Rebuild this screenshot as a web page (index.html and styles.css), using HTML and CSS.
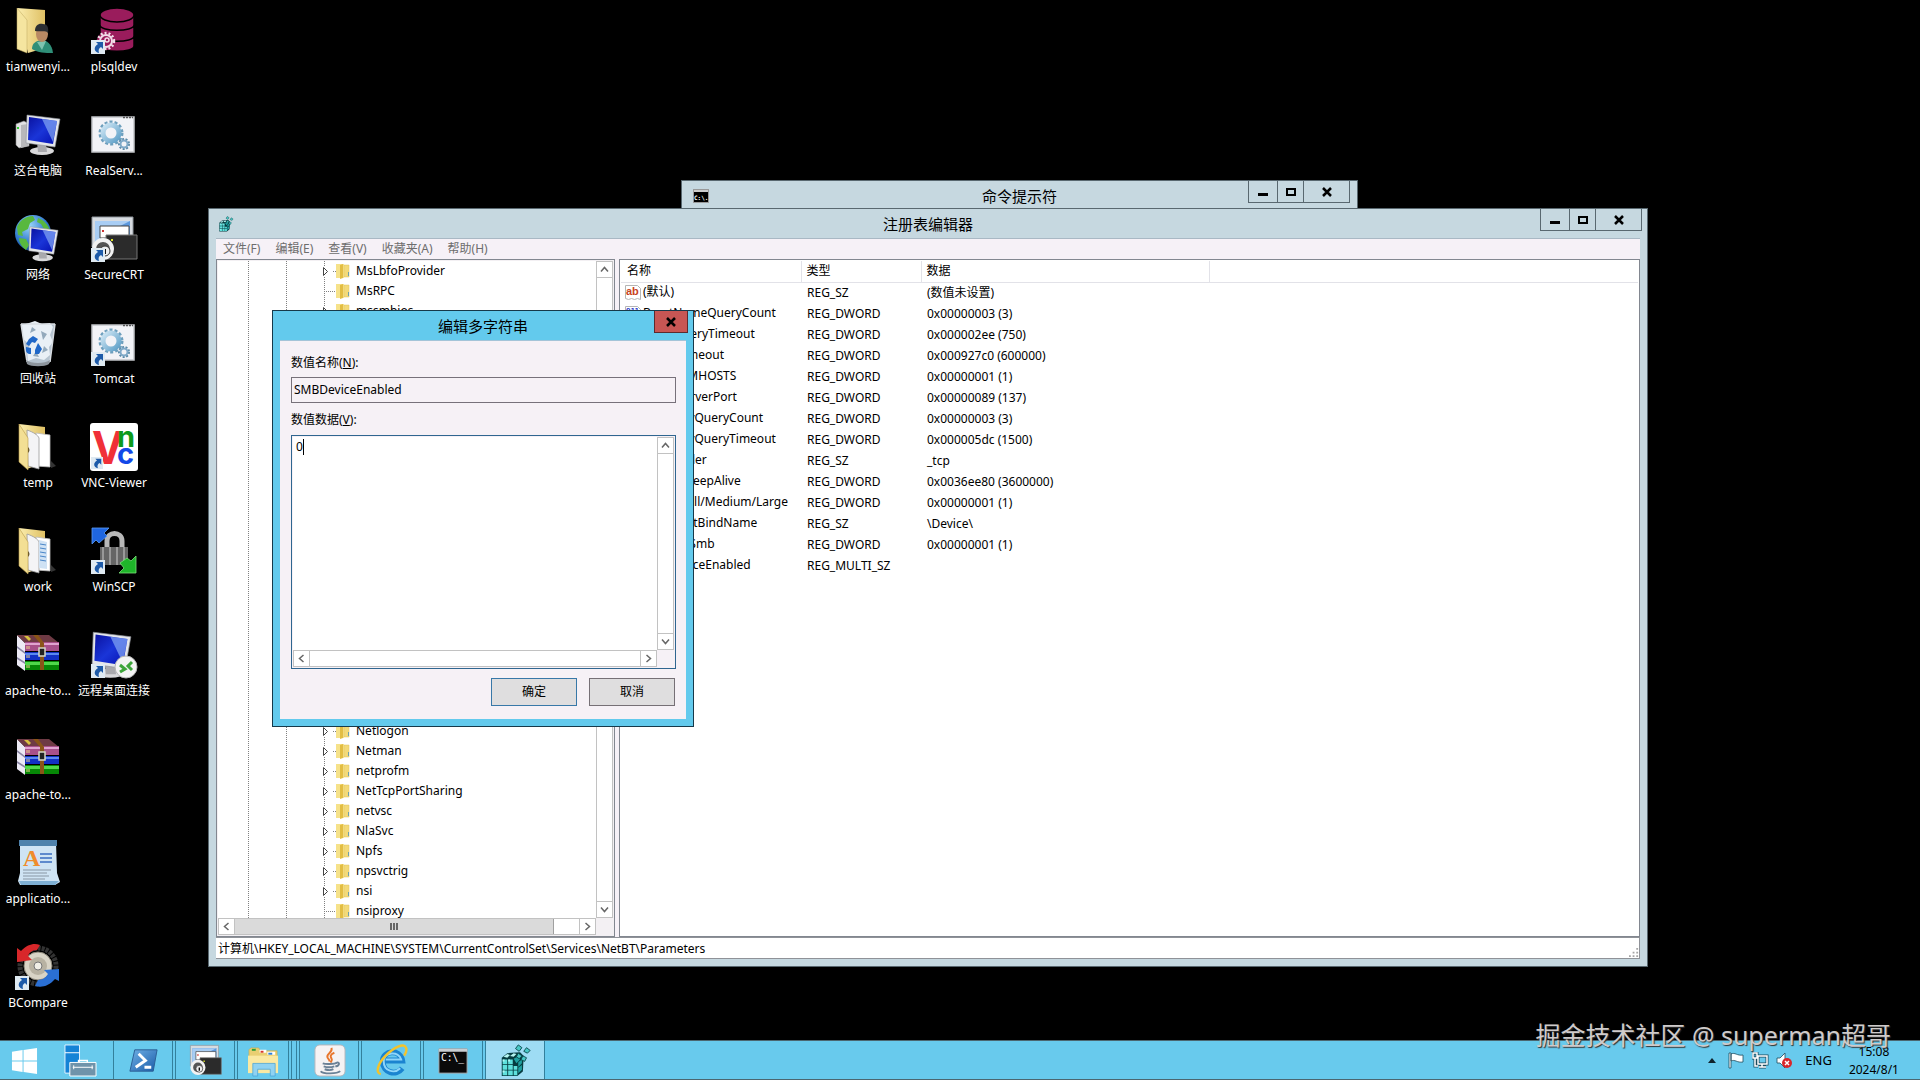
FILE: index.html
```html
<!DOCTYPE html>
<html lang="zh-CN">
<head>
    <meta charset="UTF-8">
    <meta name="viewport" content="width=device-width, initial-scale=1.0">
    <title>注册表编辑器</title>
    <link rel="stylesheet" href="styles.css">
</head>
<body>

<!-- Shared icons -->
<svg class="sprite" width="0" height="0" aria-hidden="true">
    <defs>
        <linearGradient id="screenBlue" x1="0" y1="0" x2="1" y2="1">
            <stop offset="0" stop-color="#0a12a0"/><stop offset=".5" stop-color="#1a35d8"/><stop offset="1" stop-color="#0510b0"/>
        </linearGradient>
        <linearGradient id="folderGold" x1="0" y1="0" x2="1" y2="0">
            <stop offset="0" stop-color="#fbeeb0"/><stop offset="1" stop-color="#dfc064"/>
        </linearGradient>
        <radialGradient id="globe" cx=".4" cy=".3" r=".8">
            <stop offset="0" stop-color="#9ad6fa"/><stop offset=".6" stop-color="#2f78cc"/><stop offset="1" stop-color="#0b3a86"/>
        </radialGradient>
        <linearGradient id="gearBlue" x1="0" y1="0" x2="1" y2="1">
            <stop offset="0" stop-color="#cfe6f4"/><stop offset="1" stop-color="#5fa0c8"/>
        </linearGradient>
        <linearGradient id="psBlue" x1="0" y1="0" x2="1" y2="1">
            <stop offset="0" stop-color="#6fb0e6"/><stop offset="1" stop-color="#1b5ca8"/>
        </linearGradient>
    </defs>
    <symbol id="shortcut" viewBox="0 0 14 14">
        <path fill="#dfeaf2" d="M0 0h14v14H0z"/>
        <path fill="#1d5aa8" d="M5 2h7v7l-2-2c-2 1-3 3-2 6C3 12 2 7 7 4z"/>
    </symbol>
    <symbol id="monitor" viewBox="0 0 36 42">
        <ellipse cx="17" cy="37" rx="12" ry="4" fill="#d9d9db"/>
        <path fill="#a9a9ad" d="M12 28l9 2 1 8h-9z"/>
        <path fill="#e4e6ea" stroke="#8d9098" stroke-width=".6" d="M2 1l33 4-5 28L1 29z"/>
        <path fill="url(#screenBlue)" d="M4 3l28 4-4 23L3 26z"/>
        <path fill="#7ea0f2" opacity=".75" d="M17 5l15 2-4 21z"/>
    </symbol>
    <symbol id="gears" viewBox="0 0 48 48">
        <path fill="#f2f3f7" stroke="#c4c6ca" stroke-width="1.500" d="M2 6h42v35H2z"/>
        <path stroke="#555" stroke-width="1.500" stroke-dasharray="2 1" d="M33 6.500h10"/>
        <circle cx="21" cy="22" r="11" fill="none" stroke="#6d9fbd" stroke-width="3" stroke-dasharray="3 2"/>
        <circle cx="21" cy="22" r="8" fill="none" stroke="url(#gearBlue)" stroke-width="5"/>
        <circle cx="34" cy="33" r="5" fill="none" stroke="#5b8aa8" stroke-width="2" stroke-dasharray="2 1.500"/>
        <circle cx="34" cy="33" r="3.500" fill="#f2f3f7" stroke="#7fa9c8" stroke-width="2"/>
    </symbol>
    <symbol id="rar" viewBox="0 2 48 48">
        <path fill="#eceaf4" d="M3 6l8 8v28l-8-6z"/>
        <path fill="#8a86a4" d="M3 17l8 6v2l-8-6zM3 28l8 5v2l-8-5z"/>
        <path fill="#6e3a44" d="M3 6h32l10 8H11z"/>
        <path fill="#d8c040" d="M10 7l5 5 2-2-3-3z"/>
        <path fill="#a8508a" d="M11 13h34v9H11z"/><path fill="#e0a4d0" d="M11 14h34v2H11z"/>
        <path fill="#1230c4" d="M11 23h34v8H11z"/><path fill="#5a88f0" d="M11 24h34v2H11z"/>
        <path fill="#068806" d="M11 32h34v9H11z"/><path fill="#4fd84a" d="M11 33h34v3H11z"/>
        <path fill="#8a5518" d="M19 6h5l6 8v27h-4V14z"/>
        <path fill="#222" stroke="#d6d6c6" stroke-width="1.500" d="M25 19h6v8h-6z"/>
        <path stroke="#efd68a" stroke-width="1" d="M13 17v3M15 17v3M13 26v3M15 26v3M13 36v3M15 36v3"/>
    </symbol>
    <symbol id="crt" viewBox="0 0 48 48">
        <path fill="#d7dbe0" stroke="#8f959b" d="M2 2h41v30H2z"/>
        <path fill="#5d98dd" d="M5 6h35v24H5z"/><path fill="#a8cdf4" d="M5 6h35L12 20v10H5z"/>
        <path fill="#fff" stroke="#444" d="M10 11h29v12H10z"/><path fill="#c33" d="M12 15h2v2h-2z"/>
        <path fill="#2b2b2b" stroke="#777" d="M16 20h31v24H16z"/>
        <path fill="#dce32a" d="M21 24h2v2h-2z"/>
        <circle cx="13" cy="34" r="9" fill="#555" stroke="#f2f2f2" stroke-width="4"/>
        <circle cx="15" cy="36" r="5" fill="#eee" stroke="#333"/><path stroke="#111" stroke-width="2" d="M15 34v5"/>
    </symbol>
    <symbol id="openfolder" viewBox="0 0 48 48">
        <path fill="url(#folderGold)" d="M5 1l26 3v35l-18 7z"/>
        <path fill="#fff" stroke="#bbb" stroke-width=".8" d="M22 10l14 2v32l-14-1z"/>
        <path fill="#f4f4f6" stroke="#999" stroke-width=".8" d="M13 7c6 2 11 5 12 8v31l-11-3z"/>
        <path fill="#f3df94" stroke="#b99b4a" stroke-width=".6" d="M5 1l9 14v32l-9-8z"/>
        <path fill="#6e5b2c" d="M14 24q3 3 0 6z"/>
        <path fill="#333" d="M37 38l5 5-5 2z"/>
    </symbol>
    <symbol id="treefolder" viewBox="0 0 14 16">
        <path fill="#f6e28a" d="M0 1h8v14H0z"/><path fill="#e2bd44" d="M4 2l3-1v14l-3 1z"/>
        <path fill="#f3da78" stroke="#dfc260" stroke-width=".5" d="M8 2h5v12H8z"/><path fill="#6fa0a8" d="M12 9h1v4h-1z"/>
    </symbol>
    <symbol id="expander" viewBox="0 0 7 11">
        <path fill="#fff" d="M0 0h7v11H0z"/><path fill="#fff" stroke="#444" d="M1.500 1.500v8l4-4z"/>
    </symbol>
    <symbol id="regcube" viewBox="0 0 34 36">
        <path fill="#063c40" d="M2 15l6-5 14-1 4 4-1 17-6 5H2z"/>
        <path fill="#5fe0dc" d="M3 17h5v5H3zM9 17h5v5H9zM3 23h5v5H3zM9 23h5v5H9zM3 29h5v5H3zM9 29h5v5H9zM15 29h4v5h-4zM15 24h4v4h-4z"/>
        <path fill="#b6f6f2" d="M4 14l4-3 3 1-3 3zM11 13l4-3 3 1-3 3zM3 17h2v2H3zM9 17h2v2H9zM3 29h2v2H3z"/>
        <path fill="#1fa0a0" d="M20 26l4-3v5l-4 4zM15 16l4-2 3 3-4 4zM20 20l4-3v4l-4 4z"/>
        <path fill="#48c8c6" stroke="#0a4a4e" d="M20 1l4 3-3 4-4-3zM29 4l4 3-3 3-4-2zM25 13l4 2-2 4-4-2zM20 10l4 3-3 3-3-2z"/>
    </symbol>
    <symbol id="up" viewBox="0 0 9 9"><path fill="none" stroke="#666" stroke-width="1.500" d="M1 6.500l3.500-4 3.500 4"/></symbol>
    <symbol id="down" viewBox="0 0 9 9"><path fill="none" stroke="#666" stroke-width="1.500" d="M1 2.500l3.500 4 3.500-4"/></symbol>
    <symbol id="left" viewBox="0 0 9 9"><path fill="none" stroke="#666" stroke-width="1.500" d="M6.500 1l-4 3.500 4 3.500"/></symbol>
    <symbol id="right" viewBox="0 0 9 9"><path fill="none" stroke="#666" stroke-width="1.500" d="M2.500 1l4 3.500-4 3.500"/></symbol>
    <symbol id="min" viewBox="0 0 10 10"><path d="M0 6h10v3H0z"/></symbol>
    <symbol id="max" viewBox="0 0 10 10"><path fill="none" stroke="#000" stroke-width="2" d="M1 2h8v6H1z"/></symbol>
    <symbol id="close" viewBox="0 0 10 10"><path fill="none" stroke="#000" stroke-width="2.500" d="M1 1l8 8M9 1l-8 8"/></symbol>
    <symbol id="strval" viewBox="0 0 16 16">
        <path fill="#fff" stroke="#b5b5b5" d="M.5 .5h12l3 3v11l-3-1-3 1-3-1-3 1-3-1z"/>
        <text x="1" y="10" class="val-str">ab</text>
    </symbol>
    <symbol id="binval" viewBox="0 0 16 16">
        <path fill="#fff" stroke="#b5b5b5" d="M.5 .5h12l3 3v11l-3-1-3 1-3-1-3 1-3-1z"/>
        <text x="1" y="7" class="val-bin">011</text><text x="1" y="13" class="val-bin">110</text>
    </symbol>
</svg>

<main class="desktop">
    <nav class="icons">
        <a href="#"><svg viewBox="0 0 48 48">
            <path fill="url(#folderGold)" d="M3 1l28 2v38l-17 5z"/>
            <path fill="#f5e5a0" stroke="#bda65c" stroke-width=".5" d="M3 1l10 12v33L3 42z"/>
            <path fill="#2f8f78" d="M18 42c0-6 4-8 9-9 6 0 11 4 12 13-8 0-15 0-21-4z"/>
            <path fill="#7fc4b0" d="M23 35l5 8 4-9z"/>
            <ellipse cx="28" cy="27" rx="6" ry="8" fill="#b98a64"/>
            <path fill="#2c2f33" d="M21 24c0-6 4-8 8-7 4 0 6 3 5 9-2-3-8-1-13-2z"/>
        </svg><span>tianwenyi...</span></a>
        <a href="#"><svg viewBox="0 0 48 48">
            <g fill="#9a1c5c" stroke="#000" stroke-width="1.500">
                <path d="M10 31v8c0 7 34 7 34 0v-8z"/><path d="M10 20v9c0 7 34 7 34 0v-9z"/><path d="M10 8v10c0 7 34 7 34 0V8z"/>
                <ellipse cx="27" cy="8" rx="17" ry="7"/>
            </g>
            <circle cx="16" cy="34" r="9" fill="#9a1c5c"/>
            <circle cx="16" cy="34" r="8" fill="none" stroke="#f2dce8" stroke-width="2.500" stroke-dasharray="2 2"/>
            <circle cx="16" cy="34" r="6" fill="none" stroke="#f2dce8" stroke-width="2"/>
            <circle cx="17" cy="33" r="2" fill="none" stroke="#f2dce8" stroke-width="1.500"/>
            <use href="#shortcut" x="1" y="33" width="14" height="14"/>
        </svg><span>plsqldev</span></a>
        <a href="#"><svg viewBox="0 0 48 48">
            <path fill="#e2e2e4" stroke="#8a8a8a" stroke-width=".6" d="M2 13l8-3 5 3v22L5 37l-3-3z"/><path fill="#b8b8bb" d="M7 14l7-1v22l-7 2z"/>
            <path fill="#3c3" d="M3 16h2v2H3z"/>
            <use href="#monitor" x="11" y="3" width="36" height="42"/>
        </svg><span>这台电脑</span></a>
        <a href="#"><svg viewBox="0 0 48 48"><use href="#gears"/></svg><span>RealServ...</span></a>
        <a href="#"><svg viewBox="0 0 48 48">
            <circle cx="19" cy="18" r="18" fill="url(#globe)"/>
            <path fill="#58b83e" d="M3 12C6 5 12 1 19 1l2 4-5 3-2 6-6 3 1 4-5-1zM24 3c6 2 10 7 12 12l-6-1-3-5-4-2zM5 23l7 1 3 6-3 5c-4-3-7-7-7-12z"/>
            <use href="#monitor" x="14" y="11" width="31" height="36"/>
        </svg><span>网络</span></a>
        <a href="#"><svg viewBox="0 0 48 48"><use href="#crt"/><use href="#shortcut" x="1" y="33" width="14" height="14"/></svg><span>SecureCRT</span></a>
        <a href="#"><svg viewBox="0 0 48 48">
            <path fill="#b6c4d0" d="M7 5h34l-5 38c-4 5-19 5-23 0z"/>
            <path fill="#e9f0f6" d="M8 6l7-2 6-2 7 3 8-1 3 4-3 8 3 7-4 5 1 8-6 5-8-2-8 3-1-10 3-6-7-6z"/>
            <path fill="#93a9bb" d="M27 12l6 3-4 6zM18 8l4 3-6 3zM30 27l4 4-6 3zM22 32l3 6-6-1z"/>
            <path fill="#2068c8" d="M15 20l4-3 5 3-3 4-3-1-3 4-3-2zM24 24l4 6-3 5h-4v-4zM12 28l5 1v6h-2c-3-1-4-4-3-7z"/>
            <path fill="none" stroke="#d8dde2" stroke-width="1.500" d="M7 5h34M7 5l6 38M41 5l-5 38"/>
            <path fill="#8d959d" d="M12 41c5 4 19 4 24 0l-1 4c-4 3-18 3-22 0z"/>
        </svg><span>回收站</span></a>
        <a href="#"><svg viewBox="0 0 48 48"><use href="#gears"/><use href="#shortcut" x="1" y="33" width="14" height="14"/></svg><span>Tomcat</span></a>
        <a href="#"><svg viewBox="0 0 48 48"><use href="#openfolder"/></svg><span>temp</span></a>
        <a href="#"><svg viewBox="0 0 48 48">
            <rect width="48" height="48" rx="3" fill="#fff"/>
            <text x="3" y="41" class="vnc-v">V</text><text x="27" y="24" class="vnc-n">n</text><text x="27" y="41" class="vnc-c">c</text>
            <use href="#shortcut" x="1" y="33" width="12" height="14"/>
        </svg><span>VNC-Viewer</span></a>
        <a href="#"><svg viewBox="0 0 48 48"><use href="#openfolder"/>
            <path fill="#cfe2f4" d="M25 13l8 2v27l-8-1z"/><path stroke="#4a86c8" d="M26 17l6 1M26 21l6 1M26 25l6 1M26 29l6 1M26 33l6 1"/>
        </svg><span>work</span></a>
        <a href="#"><svg viewBox="0 0 48 48">
            <path fill="none" stroke="#b8b8b8" stroke-width="5" d="M17 21v-7c0-10 15-10 15 0v7"/>
            <path fill="#666" d="M10 20h28v18H10z"/><path stroke="#999" stroke-width="2" d="M13 20v18M20 20v18M27 20v18M34 20v18"/>
            <path fill="#1f66e0" stroke="#5a9af4" stroke-width=".8" d="M2 1h17l-5 5 3 3-8 7-3-3-4 4z"/>
            <path fill="#1fb52a" stroke="#7be07a" stroke-width=".8" d="M46 46H29l5-5-4-5 7-5 4 3 5-5z"/>
            <use href="#shortcut" x="1" y="33" width="14" height="14"/>
        </svg><span>WinSCP</span></a>
        <a href="#"><svg viewBox="0 0 48 48"><use href="#rar"/></svg><span>apache-to...</span></a>
        <a href="#"><svg viewBox="0 0 48 48">
            <use href="#monitor" x="1" y="0" width="41" height="48"/>
            <circle cx="36" cy="36" r="11" fill="#f3f3f3" stroke="#b5b5b5"/>
            <path fill="none" stroke="#3da43a" stroke-width="3" d="M30 34l5 4-5 3M42 31l-4 4 4 4"/>
            <use href="#shortcut" x="1" y="33" width="14" height="14"/>
        </svg><span>远程桌面连接</span></a>
        <a href="#"><svg viewBox="0 0 48 48"><use href="#rar"/></svg><span>apache-to...</span></a>
        <i></i>
        <a href="#"><svg viewBox="0 0 48 48">
            <path fill="#cfe4f4" d="M6 3h36l1 31 3 9-5 3H6l-2-4 2-8z"/>
            <path fill="#4f82ac" d="M5 1h38v6H5z"/><path fill="#7fb0d4" d="M5 42h40l-4 4H7z"/>
            <text x="9" y="27" class="wordpad-a">A</text>
            <path stroke="#3a6cc0" stroke-width="1.500" d="M26 15h12M26 19h12M26 23h12"/>
            <path stroke="#8896a4" d="M9 31h28M9 34h24M9 37h26M9 40h22"/>
        </svg><span>applicatio...</span></a>
        <i></i>
        <a href="#"><svg viewBox="0 0 48 48">
            <circle cx="24" cy="23" r="18" fill="none" stroke="#333" stroke-width="5" stroke-dasharray="3 1"/>
            <circle cx="24" cy="23" r="14" fill="#d9d4c6" stroke="#8a8578"/>
            <circle cx="24" cy="23" r="9" fill="#b8b2a2"/><circle cx="24" cy="23" r="4" fill="#f0eee6" stroke="#777"/>
            <path fill="#d8272a" d="M3 5l4 3c7-7 13-8 19-6l-3 5c-5 0-8 3-9 6l4 4-15 2z"/>
            <path fill="#2a6fd4" d="M45 38l-4-2c-6 7-13 9-20 7l3-6c5 0 8-3 10-6l-4-4 15-1z"/>
            <use href="#shortcut" x="1" y="33" width="14" height="14"/>
        </svg><span>BCompare</span></a>
    </nav>

    <!-- Command prompt, behind the editor -->
    <section class="window cmd-window">
        <header class="titlebar">
            <svg class="app-icon" viewBox="0 0 16 16"><path fill="#000" stroke="#999" d="M.5 1.500h15v13H.5z"/><path fill="#ccc" d="M1 2h14v2H1z"/><text x="1" y="12" class="cmd-mini">C:\.</text></svg>
            <h2>命令提示符</h2>
            <div class="caption">
                <button type="button" aria-label="最小化"><svg><use href="#min"/></svg></button>
                <button type="button" aria-label="最大化"><svg><use href="#max"/></svg></button>
                <button type="button" aria-label="关闭" class="wide"><svg><use href="#close"/></svg></button>
            </div>
        </header>
    </section>

    <!-- Registry editor -->
    <section class="window reg-window">
        <header class="titlebar">
            <svg class="app-icon"><use href="#regcube"/></svg>
            <h2>注册表编辑器</h2>
            <div class="caption">
                <button type="button" aria-label="最小化"><svg><use href="#min"/></svg></button>
                <button type="button" aria-label="最大化"><svg><use href="#max"/></svg></button>
                <button type="button" aria-label="关闭" class="wide"><svg><use href="#close"/></svg></button>
            </div>
        </header>
        <div class="client">
            <div class="menubar">
                <button type="button">文件(F)</button>
                <button type="button">编辑(E)</button>
                <button type="button">查看(V)</button>
                <button type="button">收藏夹(A)</button>
                <button type="button">帮助(H)</button>
            </div>
            <div class="panes">
                <div class="tree-pane">
                    <ul class="tree">
                        <li><svg class="exp"><use href="#expander"/></svg><svg><use href="#treefolder"/></svg>MsLbfoProvider</li>
                        <li class="leaf"><svg><use href="#treefolder"/></svg>MsRPC</li>
                        <li><svg class="exp"><use href="#expander"/></svg><svg><use href="#treefolder"/></svg>mssmbios</li>
                        <li><svg class="exp"><use href="#expander"/></svg><svg><use href="#treefolder"/></svg>MTConfig</li>
                        <li><svg class="exp"><use href="#expander"/></svg><svg><use href="#treefolder"/></svg>Mup</li>
                        <li><svg class="exp"><use href="#expander"/></svg><svg><use href="#treefolder"/></svg>mvumis</li>
                        <li><svg class="exp"><use href="#expander"/></svg><svg><use href="#treefolder"/></svg>napagent</li>
                        <li><svg class="exp"><use href="#expander"/></svg><svg><use href="#treefolder"/></svg>NcaSvc</li>
                        <li><svg class="exp"><use href="#expander"/></svg><svg><use href="#treefolder"/></svg>NcbService</li>
                        <li><svg class="exp"><use href="#expander"/></svg><svg><use href="#treefolder"/></svg>NDIS</li>
                        <li><svg class="exp"><use href="#expander"/></svg><svg><use href="#treefolder"/></svg>NdisCap</li>
                        <li><svg class="exp"><use href="#expander"/></svg><svg><use href="#treefolder"/></svg>NdisImPlatform</li>
                        <li><svg class="exp"><use href="#expander"/></svg><svg><use href="#treefolder"/></svg>NdisTapi</li>
                        <li><svg class="exp"><use href="#expander"/></svg><svg><use href="#treefolder"/></svg>Ndisuio</li>
                        <li><svg class="exp"><use href="#expander"/></svg><svg><use href="#treefolder"/></svg>NdisVirtualBus</li>
                        <li><svg class="exp"><use href="#expander"/></svg><svg><use href="#treefolder"/></svg>NdisWan</li>
                        <li><svg class="exp"><use href="#expander"/></svg><svg><use href="#treefolder"/></svg>NdisWanLegacy</li>
                        <li><svg class="exp"><use href="#expander"/></svg><svg><use href="#treefolder"/></svg>NDProxy</li>
                        <li><svg class="exp"><use href="#expander"/></svg><svg><use href="#treefolder"/></svg>NetBIOS</li>
                        <li><svg class="exp"><use href="#expander"/></svg><svg><use href="#treefolder"/></svg>NetBT</li>
                        <li class="leaf"><svg><use href="#treefolder"/></svg>Linkage</li>
                        <li><svg class="exp"><use href="#expander"/></svg><svg><use href="#treefolder"/></svg>Parameters</li>
                        <li class="leaf"><svg><use href="#treefolder"/></svg>Security</li>
                        <li><svg class="exp"><use href="#expander"/></svg><svg><use href="#treefolder"/></svg>Netlogon</li>
                        <li><svg class="exp"><use href="#expander"/></svg><svg><use href="#treefolder"/></svg>Netman</li>
                        <li><svg class="exp"><use href="#expander"/></svg><svg><use href="#treefolder"/></svg>netprofm</li>
                        <li><svg class="exp"><use href="#expander"/></svg><svg><use href="#treefolder"/></svg>NetTcpPortSharing</li>
                        <li><svg class="exp"><use href="#expander"/></svg><svg><use href="#treefolder"/></svg>netvsc</li>
                        <li><svg class="exp"><use href="#expander"/></svg><svg><use href="#treefolder"/></svg>NlaSvc</li>
                        <li><svg class="exp"><use href="#expander"/></svg><svg><use href="#treefolder"/></svg>Npfs</li>
                        <li><svg class="exp"><use href="#expander"/></svg><svg><use href="#treefolder"/></svg>npsvctrig</li>
                        <li><svg class="exp"><use href="#expander"/></svg><svg><use href="#treefolder"/></svg>nsi</li>
                        <li class="leaf"><svg><use href="#treefolder"/></svg>nsiproxy</li>
                    </ul>
                    <div class="vscroll">
                        <button type="button" aria-label="向上"><svg><use href="#up"/></svg></button>
                        <button type="button" aria-label="向下"><svg><use href="#down"/></svg></button>
                    </div>
                    <div class="hscroll">
                        <button type="button" aria-label="向左"><svg><use href="#left"/></svg></button>
                        <div class="thumb"><i></i><i></i><i></i></div>
                        <button type="button" aria-label="向右"><svg><use href="#right"/></svg></button>
                    </div>
                </div>
                <div class="list-pane">
                    <table>
                        <colgroup><col class="c-name"><col class="c-type"><col class="c-data"><col></colgroup>
                        <thead><tr><th>名称</th><th>类型</th><th>数据</th><th></th></tr></thead>
                        <tbody>
                            <tr><td><svg><use href="#strval"/></svg>(默认)</td><td>REG_SZ</td><td>(数值未设置)</td></tr>
                            <tr><td><svg><use href="#binval"/></svg>BcastNameQueryCount</td><td>REG_DWORD</td><td>0x00000003 (3)</td></tr>
                            <tr><td><svg><use href="#binval"/></svg>BcastQueryTimeout</td><td>REG_DWORD</td><td>0x000002ee (750)</td></tr>
                            <tr><td><svg><use href="#binval"/></svg>CacheTimeout</td><td>REG_DWORD</td><td>0x000927c0 (600000)</td></tr>
                            <tr><td><svg><use href="#binval"/></svg>EnableLMHOSTS</td><td>REG_DWORD</td><td>0x00000001 (1)</td></tr>
                            <tr><td><svg><use href="#binval"/></svg>NameServerPort</td><td>REG_DWORD</td><td>0x00000089 (137)</td></tr>
                            <tr><td><svg><use href="#binval"/></svg>NameSrvQueryCount</td><td>REG_DWORD</td><td>0x00000003 (3)</td></tr>
                            <tr><td><svg><use href="#binval"/></svg>NameSrvQueryTimeout</td><td>REG_DWORD</td><td>0x000005dc (1500)</td></tr>
                            <tr><td><svg><use href="#strval"/></svg>NbProvider</td><td>REG_SZ</td><td>_tcp</td></tr>
                            <tr><td><svg><use href="#binval"/></svg>SessionKeepAlive</td><td>REG_DWORD</td><td>0x0036ee80 (3600000)</td></tr>
                            <tr><td><svg><use href="#binval"/></svg>Size/Small/Medium/Large</td><td>REG_DWORD</td><td>0x00000001 (1)</td></tr>
                            <tr><td><svg><use href="#strval"/></svg>TransportBindName</td><td>REG_SZ</td><td>\Device\</td></tr>
                            <tr><td><svg><use href="#binval"/></svg>UseNewSmb</td><td>REG_DWORD</td><td>0x00000001 (1)</td></tr>
                            <tr><td><svg><use href="#strval"/></svg>SMBDeviceEnabled</td><td>REG_MULTI_SZ</td><td></td></tr>
                        </tbody>
                    </table>
                </div>
            </div>
            <footer class="statusbar">
                <span>计算机\HKEY_LOCAL_MACHINE\SYSTEM\CurrentControlSet\Services\NetBT\Parameters</span>
                <svg class="grip" viewBox="0 0 11 11"><path fill="#a5a5a5" d="M8 0h2v2H8zM4 4h2v2H4zM8 4h2v2H8zM0 8h2v2H0zM4 8h2v2H4zM8 8h2v2H8z"/></svg>
            </footer>
        </div>
    </section>

    <!-- Edit multi-string dialog -->
    <form class="dialog">
        <header class="titlebar">
            <h2>编辑多字符串</h2>
            <div class="caption">
                <button type="button" aria-label="关闭" class="red"><svg><use href="#close"/></svg></button>
            </div>
        </header>
        <div class="dialog-body">
            <label for="valueName">数值名称(<u>N</u>):</label>
            <input type="text" id="valueName" value="SMBDeviceEnabled" readonly>
            <label for="valueData">数值数据(<u>V</u>):</label>
            <div class="multi">
                <textarea id="valueData" spellcheck="false">0</textarea>
                <span class="caret"></span>
                <div class="vscroll">
                    <button type="button" aria-label="向上"><svg><use href="#up"/></svg></button>
                    <button type="button" aria-label="向下"><svg><use href="#down"/></svg></button>
                </div>
                <div class="hscroll">
                    <button type="button" aria-label="向左"><svg><use href="#left"/></svg></button>
                    <button type="button" aria-label="向右"><svg><use href="#right"/></svg></button>
                </div>
            </div>
            <div class="actions">
                <button type="button" class="primary">确定</button>
                <button type="button">取消</button>
            </div>
        </div>
    </form>
</main>

<footer class="taskbar">
    <button type="button" class="start" aria-label="开始"><svg viewBox="0 0 28 28"><path fill="#fff" d="M1 5l11-2v11H1zM13 3l14-2v13H13zM1 15h11v11L1 24zM13 15h14v13l-14-2z"/></svg></button>
    <button type="button" class="server" aria-label="服务器管理器"><svg viewBox="0 0 34 34">
        <path fill="#1583d6" stroke="#e4f4ff" d="M1 1h15v29H1z"/><path stroke="#fff" d="M1 9h15"/>
        <path fill="none" stroke="#fff" stroke-width="1.500" d="M15 19v-2h9v2"/>
        <path fill="#6f93aa" stroke="#fff" d="M6 19h27v14H6z"/><path stroke="#fff" d="M9 24h21M10 22v4M29 22v4"/>
    </svg></button>
    <button type="button" class="task" aria-label="PowerShell"><svg viewBox="0 0 34 34">
        <path fill="url(#psBlue)" stroke="#2b5f96" d="M8 6h23l-4 22H3z"/><path fill="none" stroke="#fff" stroke-width="3" d="M12 10l7 7-10 7M18 24h7"/>
    </svg></button>
    <button type="button" class="task" aria-label="SecureCRT"><svg><use href="#crt"/></svg></button>
    <button type="button" class="task files" aria-label="文件资源管理器"><svg viewBox="0 0 34 34">
        <path fill="#e9cf72" stroke="#c8a94c" stroke-width=".6" d="M2 6l2-2h8l2 3h17v22H2z"/>
        <path fill="#fff" d="M13 6h7v3h-7zM21 8h8v3h-8z"/><path fill="#2aa036" d="M5 5h4v2H5z"/><path fill="#d83a2a" d="M14 7h3v2h-3z"/><path fill="#2a7fd8" d="M22 9h4v2h-4z"/>
        <path fill="#fae9a2" d="M1 12h31v18H1z"/>
        <path fill="#8fd2f2" stroke="#4aa4d8" stroke-width=".8" d="M6 20h23v13h-5v-7H11v7H6z"/>
    </svg></button>
    <span class="stack"></span>
    <button type="button" class="task" aria-label="Java"><svg viewBox="0 0 34 34">
        <rect x="2" y="1" width="31" height="32" rx="5" fill="#f5f3f4" stroke="#b6b6ba"/>
        <path fill="none" stroke="#e8762c" stroke-width="2" d="M19 4c2 5-6 6-4 10 1 2 2 2 2 4M22 9c-5 2-4 4-3 6 1 1 0 3-1 4"/>
        <path fill="none" stroke="#6a8196" stroke-width="2" d="M10 20c3 1 12 1 15-1 3 0 2 4-2 4M11 23c3 1 8 1 11 0M12 26c3 1 7 1 9 0M8 28c2 3 17 3 20 0"/>
    </svg></button>
    <button type="button" class="task" aria-label="Internet Explorer"><svg viewBox="0 0 34 34">
        <path fill="none" stroke="#1b84d0" stroke-width="6" d="M28 25c-6 8-20 5-20-7S26 5 28 17H10"/>
        <path fill="none" stroke="#8fd6fa" stroke-width="2" d="M26 25c-6 6-17 3-17-7S25 7 27 16H11"/>
        <path fill="none" stroke="#f2c32c" stroke-width="2.500" d="M6 31c-6-1-3-11 5-19S30-2 32 4c1 2 0 5-2 8"/>
    </svg></button>
    <button type="button" class="task" aria-label="命令提示符"><svg viewBox="0 0 34 34">
        <path fill="#0a0a0a" stroke="#a9adb0" d="M2 5h29v25H2z"/><path fill="#c9ced2" d="M2 5h29v3H2z"/><text x="4" y="17" class="cmd-text">C:\_</text>
    </svg></button>
    <button type="button" class="task active" aria-label="注册表编辑器"><svg><use href="#regcube"/></svg></button>

    <div class="tray">
        <svg class="more" viewBox="0 0 8 5"><path fill="#10232c" d="M0 5l4-5 4 5z"/></svg>
        <svg viewBox="0 0 17 17"><path fill="#fff" stroke="#1d4a5c" stroke-width=".8" d="M1 1h2v15H1zM3 2c4-2 6 2 12 1v7c-6 1-8-3-12-1z"/></svg>
        <svg viewBox="0 0 17 17"><path fill="none" stroke="#1d4a5c" stroke-width="3" d="M6 4h9v8H6zM7 15h7M10 12v3M1 1h4v5H1zM3 6v8h3"/><path fill="none" stroke="#fff" stroke-width="1.500" d="M6 4h9v8H6zM7 15h7M10 12v3M1 1h4v5H1zM3 6v8h3"/></svg>
        <svg viewBox="0 0 17 17"><path fill="#fff" stroke="#1d4a5c" stroke-width=".8" d="M1 6h3l5-5v15l-5-5H1z"/><circle cx="11" cy="11" r="5" fill="#d9252a"/><path stroke="#fff" stroke-width="1.500" d="M9 9l4 4M13 9l-4 4"/></svg>
        <span class="lang">ENG</span>
        <time><span>15:08</span><span>2024/8/1</span></time>
    </div>
</footer>

<div class="watermark">掘金技术社区 @ superman超哥</div>

</body>
</html>
```
FILE: styles.css
```css
* {
    box-sizing: border-box;
}
html, body {
    height: 100%;
}
body {
    margin: 0;
    display: flex;
    flex-direction: column;
    overflow: hidden;
    background: #000;
    color: #000;
    font: 12px/16px "Noto Sans", "Noto Sans CJK SC", sans-serif;
}
button, input, textarea {
    font: inherit;
    color: inherit;
    margin: 0;
    padding: 0;
    border: 0;
    border-radius: 0;
    background: none;
}
button {
    display: flex;
    align-items: center;
    justify-content: center;
}
ul, h2 {
    margin: 0;
    padding: 0;
    list-style: none;
    font-weight: normal;
}
svg {
    display: block;
    flex: none;
}
.sprite {
    position: absolute;
}

/* Desktop */
.desktop {
    position: relative;
    flex: 1;
    min-height: 0;
}
.icons {
    display: grid;
    grid-template-columns: 76px 76px;
    grid-auto-rows: 104px;
    width: 152px;
    padding-top: 7px;
}
.icons a {
    display: flex;
    flex-direction: column;
    align-items: center;
    gap: 4px;
    color: #fff;
    text-decoration: none;
    white-space: nowrap;
}
.icons svg {
    width: 48px;
    height: 48px;
}
.vnc-v {
    font: bold 46px "Open Sans", sans-serif;
    fill: #f03038;
}
.vnc-n, .vnc-c {
    font: bold 29px Inter, sans-serif;
    fill: #0c9a1c;
}
.vnc-c {
    fill: #1248e8;
}
.wordpad-a {
    font: bold 24px "Liberation Serif", serif;
    fill: #f08c2c;
}

/* Windows */
.window {
    position: absolute;
    display: flex;
    flex-direction: column;
    padding: 0 7px 7px;
    border: 1px solid #596870;
    background: #c6d8e0;
}
.cmd-window {
    left: 681px;
    top: 180px;
    width: 677px;
    height: 400px;
}
.reg-window {
    left: 208px;
    top: 208px;
    width: 1440px;
    height: 759px;
}
.titlebar {
    position: relative;
    flex: none;
    display: flex;
    align-items: center;
    height: 29px;
}
.titlebar h2 {
    flex: 1;
    text-align: center;
    font-size: 15px;
    line-height: 20px;
}
.app-icon {
    position: absolute;
    left: 2px;
    width: 16px;
    height: 16px;
}
.cmd-window .app-icon {
    left: 4px;
}
.cmd-mini {
    font: bold 6px "DejaVu Sans Mono", monospace;
    fill: #fff;
}
.caption {
    position: absolute;
    top: 0;
    right: -2px;
    display: flex;
    border: 1px solid #596870;
    border-top: 0;
}
.cmd-window .caption {
    right: 0;
}
.caption button {
    width: 28px;
    height: 21px;
}
.caption button + button {
    width: 26px;
    border-left: 1px solid #596870;
}
.caption button.wide {
    width: 46px;
}
.caption svg {
    width: 10px;
    height: 10px;
}
.client {
    flex: 1;
    min-height: 0;
    display: flex;
    flex-direction: column;
    border-top: 1px solid #a9b8c4;
    background: #f6f1f7;
}
.menubar {
    display: flex;
    gap: 1px;
    height: 20px;
    color: #6d6d6d;
}
.menubar button {
    padding: 0 7px;
}
.panes {
    flex: 1;
    min-height: 0;
    display: flex;
    gap: 4px;
}
.tree-pane, .list-pane {
    border: 1px solid #828790;
    background: #fff;
}
.tree-pane {
    flex: none;
    width: 399px;
    padding: 1px;
    display: grid;
    grid-template-columns: 1fr 17px;
    grid-template-rows: 1fr 17px;
    background: #f3f0f3;
}
.tree {
    --dots: repeating-linear-gradient(#808080 0 1px, transparent 1px 2px);
    overflow: hidden;
    min-height: 0;
    background: var(--dots) 30px 0 / 1px 100% no-repeat,
                var(--dots) 68px 0 / 1px 100% no-repeat,
                var(--dots) 106px 0 / 1px 100% no-repeat,
                #fff;
}
.tree li {
    display: flex;
    align-items: center;
    height: 20px;
    padding-left: 104px;
}
.tree li.leaf {
    padding-left: 106px;
}
.tree svg {
    width: 14px;
    height: 16px;
    margin-right: 6px;
}
.tree svg.exp {
    width: 7px;
    height: 11px;
    margin: 0;
}
/* dotted stub between the guide line and the folder */
.tree li.leaf::before {
    content: "";
    flex: none;
    width: 12px;
    height: 1px;
    background: repeating-linear-gradient(90deg, #808080 0 1px, transparent 1px 2px);
}
.tree .exp + svg {
    width: 21px;
    padding-left: 7px;
    background: repeating-linear-gradient(90deg, transparent 0 1px, #808080 1px 2px) 3px 8px / 4px 1px no-repeat;
}

/* Scrollbars */
.vscroll, .hscroll {
    display: flex;
    justify-content: space-between;
    border: 1px solid #c2c2c2;
    background: #fff;
}
.vscroll {
    flex-direction: column;
}
.vscroll button {
    flex: none;
    width: 15px;
    height: 16px;
    border-bottom: 1px solid #c2c2c2;
}
.hscroll button {
    flex: none;
    width: 16px;
    height: 15px;
}
.vscroll button + button {
    border-top: 1px solid #c2c2c2;
    border-bottom: 0;
}
.hscroll button:first-child {
    border-right: 1px solid #c2c2c2;
}
.hscroll button:last-child {
    border-left: 1px solid #c2c2c2;
}
.vscroll svg, .hscroll svg {
    width: 9px;
    height: 9px;
}
.thumb {
    display: flex;
    align-items: center;
    justify-content: center;
    gap: 1px;
    width: 319px;
    margin-right: auto;
    border-right: 1px solid #a0a0a0;
    background: #dadada;
}
.thumb i {
    width: 2px;
    height: 7px;
    background: #666;
}

/* Value list */
.list-pane {
    flex: 1;
    overflow: hidden;
    padding: 1px 1px 0;
}
table {
    width: 100%;
    table-layout: fixed;
    border-collapse: collapse;
}
.c-name {
    width: 180px;
}
.c-type {
    width: 120px;
}
.c-data {
    width: 288px;
}
th {
    height: 21px;
    padding: 0 0 0 5px;
    border-right: 1px solid #e2e2e8;
    border-bottom: 1px solid #e2e2e8;
    text-align: left;
    font-weight: normal;
}
th:first-child {
    padding-left: 6px;
}
th:last-child {
    border-right: 0;
}
td {
    height: 21px;
    padding: 0 0 0 6px;
    white-space: nowrap;
}
td:first-child {
    padding-left: 4px;
}
td svg {
    display: inline-block;
    width: 16px;
    height: 16px;
    margin-right: 2px;
    vertical-align: middle;
}
.val-str {
    font: bold 11px "Liberation Sans", sans-serif;
    fill: #c8421c;
}
.val-bin {
    font: bold 8px "Liberation Sans", sans-serif;
    fill: #2438c8;
}
.statusbar {
    display: flex;
    align-items: center;
    justify-content: space-between;
    height: 22px;
    padding: 1px 0 0 2px;
    border: 1px solid #8f9298;
    border-left: 0;
    background: #fff;
}
.grip {
    width: 10px;
    height: 10px;
    align-self: flex-end;
}

/* Dialog */
.dialog {
    position: absolute;
    left: 272px;
    top: 310px;
    width: 422px;
    padding: 0 7px 7px;
    border: 1px solid #16394a;
    background: #63caed;
}
.dialog .caption {
    right: -2px;
    border-color: #5d2a2e;
}
.caption button.red {
    width: 32px;
    background: #c75654;
}
.dialog-body {
    display: flex;
    flex-direction: column;
    padding: 14px 10px 13px 11px;
    border-top: 1px solid #a4c4d8;
    background: #f6f1f6;
}
.dialog input {
    height: 26px;
    margin: 6px 0 9px;
    padding: 0 2px 2px;
    border: 1px solid #77717a;
}
.multi {
    position: relative;
    display: grid;
    grid-template-columns: 1fr 17px;
    grid-template-rows: 1fr 17px;
    height: 234px;
    margin: 7px 0 9px;
    padding: 1px;
    border: 1px solid #2f6690;
}
.multi textarea {
    padding: 2px 3px;
    resize: none;
    outline: 0;
    background: #fff;
}
.caret {
    position: absolute;
    left: 11px;
    top: 3px;
    width: 1px;
    height: 16px;
    background: #000;
}
.actions {
    display: flex;
    justify-content: flex-end;
    gap: 12px;
    padding-right: 1px;
}
.actions button {
    width: 86px;
    height: 28px;
    border: 1px solid #767076;
    background: #dfdedf;
}
.actions button.primary {
    border-color: #3878a8;
}

/* Taskbar */
.taskbar {
    flex: none;
    display: flex;
    gap: 2px;
    height: 40px;
    border-top: 1px solid #4b6670;
    border-bottom: 1px solid #4b6670;
    background: #68caed;
}
.taskbar > button svg {
    width: 33px;
    height: 33px;
}
.taskbar .start {
    width: 48px;
}
.taskbar .start svg {
    width: 27px;
    height: 27px;
}
.taskbar .server {
    width: 61px;
}
.task {
    width: 60px;
    border: 1px solid #33809c;
    border-width: 0 1px;
}
.task.files {
    width: 52px;
}
.task.active {
    background: #9edcf4;
}
.stack {
    width: 6px;
    border: 1px solid #33809c;
    border-width: 0 1px;
}
.cmd-text {
    font: 10px "DejaVu Sans Mono", monospace;
    fill: #fff;
}
.tray {
    display: flex;
    align-items: center;
    gap: 7px;
    margin-left: auto;
    padding-right: 21px;
}
.tray svg {
    width: 17px;
    height: 17px;
}
.tray .more {
    width: 8px;
    height: 5px;
    margin-right: 5px;
}
.lang {
    margin: 0 10px 0 5px;
    font-size: 13px;
}
.tray time {
    display: flex;
    flex-direction: column;
    align-items: center;
    padding-top: 2px;
    line-height: 18px;
}

.watermark {
    position: absolute;
    right: 29px;
    bottom: 28px;
    color: #cfcbcb;
    font-size: 25px;
    line-height: 34px;
    text-shadow: 1px 1px 1px #333;
}
```
